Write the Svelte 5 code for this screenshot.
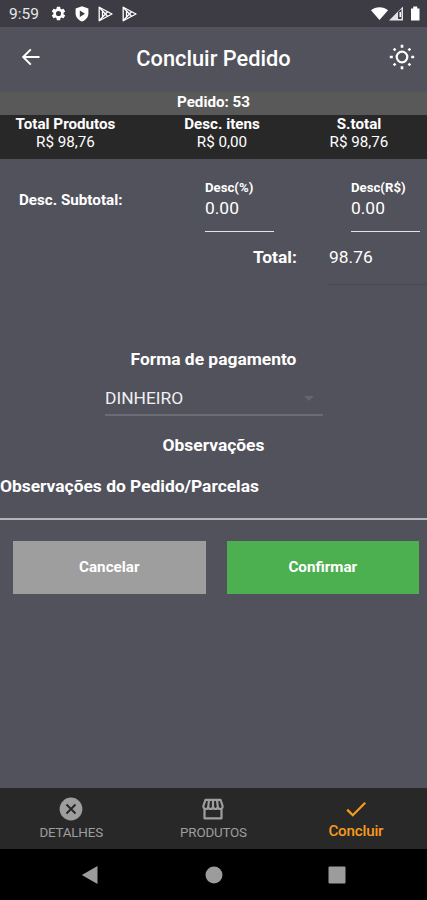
<script lang="ts">
    let totals = [
        { label: 'Total Produtos', value: 'R$ 98,76' },
        { label: 'Desc. itens', value: 'R$ 0,00' },
        { label: 'S.total', value: 'R$ 98,76' }
    ];

    let tabs = [
        { name: 'details', label: 'DETALHES' },
        { name: 'products', label: 'PRODUTOS' },
        { name: 'finish', label: 'Concluir' }
    ];

    let activeTab = $state('finish');
</script>

<div class="screen">
    <div class="status-bar">
        <span class="clock">9:59</span>
        <svg class="gear" width="17" height="17" viewBox="0 0 24 24" fill="#fff">
            <path d="M19.14 12.94c.04-.3.06-.61.06-.94s-.02-.64-.07-.94l2.03-1.58a.5.5 0 0 0 .12-.61l-1.92-3.32a.49.49 0 0 0-.59-.22l-2.39.96a7 7 0 0 0-1.62-.94l-.36-2.54a.48.48 0 0 0-.48-.41h-3.84a.47.47 0 0 0-.47.41l-.36 2.54c-.59.24-1.13.57-1.62.94l-2.39-.96a.48.48 0 0 0-.59.22L2.74 8.87a.48.48 0 0 0 .12.61l2.03 1.58a6 6 0 0 0-.02 1.88l-2.03 1.58a.5.5 0 0 0-.12.61l1.92 3.32c.12.22.37.29.59.22l2.39-.96c.5.38 1.03.7 1.62.94l.36 2.54c.05.24.24.41.48.41h3.84c.24 0 .44-.17.47-.41l.36-2.54a7 7 0 0 0 1.62-.94l2.39.96c.22.08.47 0 .59-.22l1.92-3.32a.48.48 0 0 0-.12-.61zM12 15.6a3.6 3.6 0 1 1 0-7.2 3.6 3.6 0 0 1 0 7.2z" />
        </svg>
        <svg class="shield" width="14" height="16" viewBox="0 0 14 16">
            <path d="M7 .3 13.4 2.5v5c0 3.6-2.6 6.6-6.4 8.1C3.2 14.1.6 11.1.6 7.5v-5z" fill="#fff" />
            <path d="M4.8 4.5 10 7.7 4.8 10.9z" fill="#3d3c44" />
        </svg>
        {#each [0, 1] as item (item)}
            <svg class="play" width="15" height="16" viewBox="0 0 15 16" fill="none" stroke="#fff" stroke-width="1.3" stroke-linejoin="round">
                <path d="M1.2 1.2 14 8 1.2 14.8z" />
                <path d="M1.2 1.2 9.5 10.3M1.2 14.8 9.5 5.7M4.5 5v6" />
            </svg>
        {/each}
        <svg class="signals" width="50" height="18" viewBox="0 0 50 18" fill="#fff">
            <path d="M0 5.3C4.5 1.1 12.5 1.1 17 5.3L8.500 15z" />
            <path d="M18 15.500 32 1.500v14z" fill="#e4e4e8" />
            <path d="M27 7v7h3.500V4z" fill="#3d3c44" />
            <path d="M28.500 7H30v5h-1.500z" />
            <path d="M40 3.500h2.200V1.500h4v2h2.300V15.500H40z" />
        </svg>
    </div>

    <header>
        <button class="icon-btn" aria-label="Voltar">
            <svg width="20" height="18" viewBox="0 0 20 18" fill="none" stroke="#fff" stroke-width="2">
                <path d="M18.500 9H2.500M9.800 1.400 2.200 9l7.600 7.600" />
            </svg>
        </button>
        <h1>Concluir Pedido</h1>
        <button class="icon-btn" aria-label="Tema">
            <svg width="26" height="26" viewBox="0 0 26 26" fill="#fff">
                <circle cx="13" cy="13" r="5.3" fill="none" stroke="#fff" stroke-width="2.200" />
                <path d="M11.700.8h2.600v3h-2.600zM11.700 22.200h2.600v3h-2.600zM.8 11.700h3v2.600h-3zM22.200 11.700h3v2.600h-3z" />
                <path d="m3.800 5.400 1.700-1.700 1.900 1.900-1.700 1.700zM18.600 5.600l1.900-1.900 1.700 1.700-1.900 1.900zM3.800 20.600l1.900-1.900 1.700 1.700-1.900 1.900zM18.600 20.400l1.700-1.700 1.900 1.900-1.700 1.700z" />
            </svg>
        </button>
    </header>

    <div class="order">Pedido: 53</div>
    <div class="totals">
        {#each totals as total (total.label)}
            <div class="total">
                <b>{total.label}</b>
                <span>{total.value}</span>
            </div>
        {/each}
    </div>

    <main>
        <div class="discount">
            <span class="discount-label">Desc. Subtotal:</span>
            <div class="field">
                <b>Desc(%)</b>
                <span>0.00</span>
            </div>
            <div class="field">
                <b>Desc(R$)</b>
                <span>0.00</span>
            </div>
        </div>
        <div class="grand-total">
            <b>Total:</b>
            <span>98.76</span>
        </div>

        <h2 class="payment-title">Forma de pagamento</h2>
        <div class="select">
            <span>DINHEIRO</span>
            <i class="caret"></i>
        </div>

        <h2 class="notes-title">Observações</h2>
        <div class="notes">Observações do Pedido/Parcelas</div>

        <div class="actions">
            <button class="cancel">Cancelar</button>
            <button class="confirm">Confirmar</button>
        </div>
    </main>

    <nav>
        {#each tabs as tab (tab.name)}
            <button class="tab" class:active={activeTab === tab.name} onclick={() => (activeTab = tab.name)}>
                <svg width="24" height="24" viewBox="0 0 24 24">
                    {#if tab.name === 'details'}
                        <circle cx="12" cy="12" r="11.4" fill="currentColor" />
                        <path d="m7.500 7.500 9 9m0-9-9 9" stroke="#282828" stroke-width="2" />
                    {:else if tab.name === 'products'}
                        <path d="M4.500 2.800h15l2 5.700c.6 2.300-.8 3.500-2.300 3.500-1.300 0-2.200-.8-2.400-2-.2 1.200-1.100 2-2.400 2S12.200 11.200 12 10c-.2 1.200-1.100 2-2.400 2s-2.200-.8-2.400-2c-.2 1.200-1.100 2-2.400 2-1.500 0-2.900-1.200-2.300-3.500zM3.500 12v9.300h17V12M8 3l-.8 7M12 3v7M16 3l.8 7" fill="none" stroke="currentColor" stroke-width="2.200" stroke-linejoin="round" />
                    {:else}
                        <path d="m3.200 12.600 5.600 5.600L21.200 5.800" fill="none" stroke="currentColor" stroke-width="2.300" />
                    {/if}
                </svg>
                <span>{tab.label}</span>
            </button>
        {/each}
    </nav>

    <div class="system-nav">
        <svg width="18" height="20" viewBox="0 0 18 20"><path d="M16.500 1v18L.8 10z" fill="#9c9c9c" /></svg>
        <svg width="18" height="18" viewBox="0 0 18 18"><circle cx="9" cy="9" r="8.500" fill="#9c9c9c" /></svg>
        <svg width="18" height="18" viewBox="0 0 18 18"><rect x=".5" y=".5" width="17" height="17" rx="1" fill="#9c9c9c" /></svg>
    </div>
</div>

<style>
    :global(body) {
        margin: 0;
        background: #52525c;
    }
    .screen {
        display: flex;
        flex-direction: column;
        width: 427px;
        height: 900px;
        overflow: hidden;
        background: #52525c;
        color: #fff;
        font-family: Roboto, sans-serif;
    }
    svg {
        display: block;
        flex: none;
    }
    button {
        border: 0;
        padding: 0;
        background: none;
        color: inherit;
        font-family: inherit;
    }
    b {
        font-weight: 700;
    }

    .status-bar {
        display: flex;
        align-items: center;
        height: 27px;
        padding: 0 6px 0 9px;
        background: #3d3c44;
    }
    .clock {
        width: 41px;
        font-size: 15.5px;
        color: #e8e8ea;
    }
    .gear {
        margin-right: 8px;
    }
    .shield {
        margin-right: 9px;
    }
    .play {
        margin-right: 9px;
    }
    .signals {
        margin-left: auto;
    }

    header {
        display: flex;
        align-items: center;
        justify-content: space-between;
        height: 65px;
        padding: 0 10px 5px 21px;
        box-sizing: border-box;
    }
    header .icon-btn {
        width: 28px;
        display: flex;
    }
    header .icon-btn:first-child {
        width: 17px;
    }
    h1 {
        margin: 0;
        padding-top: 2px;
        font-size: 21.8px;
        font-weight: 500;
    }

    .order {
        height: 23px;
        line-height: 20px;
        background: #595959;
        text-align: center;
        font-size: 15.2px;
        font-weight: 700;
    }
    .totals {
        display: flex;
        height: 44px;
        background: #282828;
    }
    .total {
        display: flex;
        flex-direction: column;
        align-items: center;
        width: 131px;
        font-size: 15.2px;
        line-height: 18px;
    }
    .total:nth-child(2) {
        width: 182px;
    }
    .total:nth-child(3) {
        width: 92px;
    }

    main {
        flex: 1;
        display: flex;
        flex-direction: column;
    }
    .discount {
        display: flex;
        height: 74px;
        padding: 0 7px 0 19px;
    }
    .discount-label {
        width: 186px;
        padding-top: 31px;
        font-size: 15.2px;
        line-height: 20px;
        font-weight: 700;
    }
    .field {
        display: flex;
        flex-direction: column;
        width: 69px;
        height: 52px;
        padding-top: 20px;
        border-bottom: 1px solid #e4e4e8;
        font-size: 17.4px;
    }
    .field + .field {
        margin-left: 77px;
    }
    .field b {
        font-size: 13.2px;
        line-height: 17px;
    }
    .field span {
        line-height: 25px;
    }
    .grand-total {
        display: flex;
        height: 52px;
        padding-left: 253px;
        font-size: 17.4px;
        line-height: 49px;
    }
    .grand-total b {
        width: 75px;
    }
    .grand-total span {
        flex: 1;
        border-bottom: 1px solid #494952;
        padding-left: 1px;
    }
    h2 {
        margin: 0;
        font-size: 17.4px;
        line-height: 22px;
        font-weight: 700;
        text-align: center;
    }
    .payment-title {
        margin-top: 63px;
    }
    .select {
        display: flex;
        align-items: center;
        justify-content: space-between;
        width: 218px;
        height: 34px;
        margin: 12px 0 0 105px;
        padding-right: 9px;
        box-sizing: border-box;
        border-bottom: 2px solid #6b6b75;
        font-size: 17.4px;
        color: #f0f0f2;
    }
    .caret {
        border: 5px solid transparent;
        border-top-color: #65656c;
        border-bottom: 0;
    }
    .notes-title {
        margin-top: 18px;
    }
    .notes {
        height: 43px;
        margin-top: 19px;
        border-bottom: 2px solid #b4b4bb;
        font-size: 17.4px;
        line-height: 22px;
        font-weight: 700;
    }
    .actions {
        display: flex;
        gap: 21px;
        padding: 21px 8px 0 13px;
    }
    .actions button {
        flex: 1;
        height: 53px;
        padding-bottom: 2px;
        background: #9e9e9e;
        font-size: 15.2px;
        font-weight: 700;
    }
    .actions .confirm {
        background: #4caf50;
    }

    nav {
        display: flex;
        height: 61px;
        background: #282828;
    }
    .tab {
        flex: 1;
        display: flex;
        flex-direction: column;
        align-items: center;
        padding-top: 9px;
        color: #9e9e9e;
        font-size: 13.4px;
        line-height: 23px;
        letter-spacing: -0.2px;
    }
    .tab.active {
        color: #f89a1c;
        font-size: 15.2px;
        font-weight: 500;
        line-height: 21px;
    }
    .system-nav {
        display: flex;
        align-items: center;
        justify-content: space-between;
        height: 51px;
        padding: 0 81px;
        box-sizing: border-box;
        background: #000;
    }
</style>
